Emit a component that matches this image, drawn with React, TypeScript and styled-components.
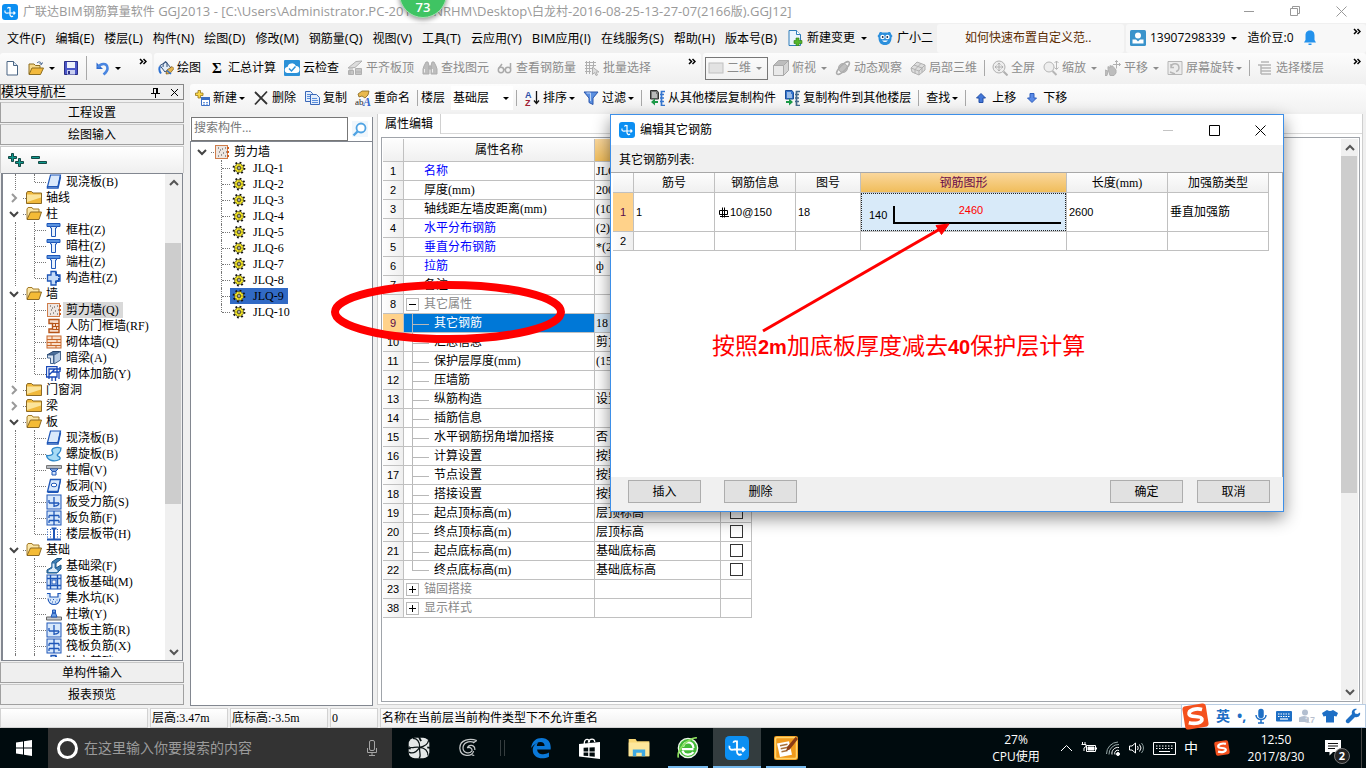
import React from 'react';
import styled, { createGlobalStyle, css } from 'styled-components';

const UI = '"Open Sans", "Noto Sans CJK SC", sans-serif';
const SONG = '"Liberation Serif", "Noto Sans CJK SC", serif';
const NUM = '"Liberation Sans", "Noto Sans CJK SC", sans-serif';

const Global = createGlobalStyle`
  * { box-sizing: border-box; }
  body { margin: 0; background: #f0f0f0; overflow: hidden; }
  button, input { font: inherit; color: inherit; }
`;

/* ---------- icons ---------- */

const blue = '#1f57b8';
const pale = '#d8e8fb';

const icons: Record<string, React.ReactNode> = {
  doc: <><path d="M3 1.5h6.500l4 4v9.500H3z" fill="#fff" stroke="#4a6583" /><path d="M9.500 1.500v4h4" fill="#dbe7f5" stroke="#4a6583" /></>,
  open: <><path d="M1 14V4h5l1.500 1.500H12V8" fill="#f6d98a" stroke="#8d6d1f" /><path d="M1 14.500 4 8h11.500l-3 6.500z" fill="#f2b93c" stroke="#8d6d1f" /><path d="M9 3c2-2 4-1 4.500 1M14.500 2.500l-1 2-2-1" fill="none" stroke="#3d5d8a" /></>,
  save: <><path d="M1.500 1.500h13v13h-13z" fill="#4b57c8" stroke="#2b2f86" /><rect x="4" y="2" width="8" height="6" fill="#eef2fb" /><rect x="4" y="10" width="8" height="4.500" fill="#c9cff0" /><rect x="5" y="11" width="2" height="3" fill="#2b2f86" /></>,
  undo: <><path d="M2.500 2.500v6.500h6.500z" fill="#2e6bd0" /><path d="M4 7.500C6.500 3 13 2.500 13.500 8c.2 3-1.500 4.500-4 6.500" fill="none" stroke="#4a86e0" strokeWidth="2.600" /></>,
  paint: <><path d="M2 5.500 8 2l5 6-6 4z" fill="#e3ecf6" stroke="#314e78" /><path d="M5 7c0-5 3-7 4-4v4" stroke="#314e78" fill="none" /><path d="m8 14 1-4 5-3.500 2 2-4 5z" fill="#e6b54e" stroke="#7a5212" strokeWidth=".7" /><path d="M9 10.500 13 14" stroke="#2d71d2" strokeWidth="1.500" /><path d="M2 6.500c-1.500 3-.5 5 1 7" stroke="#2d71d2" strokeWidth="2" fill="none" /></>,
  cloud: <><rect width="16" height="16" rx="1" fill="#2b91d8" /><path d="M4 13a3 3 0 0 1-.5-6 4.500 4.500 0 0 1 8.500-1 3.500 3.500 0 0 1 0 7z" fill="#fff" /><path d="m5 8.500 2.500 2.500 4-4.500" stroke="#2b91d8" fill="none" strokeWidth="1.500" /></>,
  flat: <g fill="#ddd" stroke="#b0b0b0"><path d="M1 8 9 1.500l6-.5-7 6.500z" /><path d="M1.500 10.500h5v4h-5zM8.500 8.500h6v6h-6z" fill="#c6c6c6" /><path d="M3 8v6M5 8v2.500M8 12h7" /></g>,
  binoc: <g fill="#bdbdbd" stroke="#adadad"><path d="M2 6 4 2h2l1 4v8H1V9zM14 6l-2-4h-2L9 6v8h6V9z" /><path d="M7 6h2v3H7z" /><path d="M2.500 9v3.500M10.500 9v3.500" stroke="#eee" /></g>,
  glasses: <g fill="none" stroke="#aaa" strokeWidth="1.500"><circle cx="4" cy="10" r="2.700" /><circle cx="11" cy="10" r="2.700" /><path d="M6.500 9.500h2M2 8l3-4M13.500 9V3" /></g>,
  batch: <g fill="none" stroke="#b0b0b0"><path d="M1 2.500h11M1 5.500h11M1 8.500h7M1 11.500h6M2.500 1v13M5.500 1v13M9.500 1v6" /><path d="m8.500 7 6.500 5h-3l1.500 3-1.500.5-1.500-3-2 2z" fill="#ddd" /></g>,
  flatbox: <rect x="1" y="3" width="14" height="10" fill="#e2e2e2" stroke="#c0c0c0" />,
  cube: <g stroke="#aaa" fill="#e9e9e9"><path d="M.5 5.500h10v10H.5z" /><path d="m.5 5.500 5-5h10l-5 5z" fill="#bdbdbd" /><path d="m10.500 5.500 5-5v10l-5 5z" fill="#d4d4d4" /></g>,
  planet: <g fill="#c0c0c0" stroke="#adadad"><circle cx="8" cy="8" r="4.500" /><ellipse cx="8" cy="8" rx="8.500" ry="2.800" transform="rotate(-45 8 8)" fill="none" strokeWidth="1.500" /></g>,
  local3d: <g fill="#ddd" stroke="#b0b0b0"><path d="m1 8 6-6 8 3v5l-6 5-7-3z" /><path d="m1 8 8 3 6-6M9 11v4M4 5l8 3M11 3.500 5 9.500M5 9.500v4M12 8v4.500" fill="none" /></g>,
  full: <g fill="none" stroke="#b0b0b0"><circle cx="7" cy="7" r="6" fill="#eee" /><path d="M7 3v8M3 7h8M5.500 4.500 7 3l1.500 1.500M5.500 9.500 7 11l1.500-1.500M4.500 5.500 3 7l1.500 1.500M9.500 5.500 11 7 9.500 8.500" /><path d="m11.500 11.500 4 4" strokeWidth="2" /></g>,
  zoom: <g fill="none" stroke="#b6b6b6"><circle cx="6" cy="7" r="5" fill="#eee" /><path d="m9.500 11 4 4" strokeWidth="2" /><path d="M13.500 1v8M11.500 3l2-2 2 2M11.500 7.500l2 2 2-2" /></g>,
  pan: <g fill="#bdbdbd" stroke="#b0b0b0"><path d="M3 9V6.500L5 8V5.500L7 7V5.500l2 2 2 2.500v3l-2 2.500H5z" /><path d="M11.500.5v8M8 4.500h7.500M10 2 11.500.5 13 2M14 3l1.500 1.500L14 6" fill="none" /><path d="m0 10 3 1-1 4.500H0z" /></g>,
  rotate: <g fill="none" stroke="#b6b6b6"><path d="M1 1.500h14v13H1z" fill="#ececec" /><path d="M4 7a4 4 0 1 1 5 4.500M4 4v3.500h3M3 12l5 2" strokeWidth="1.500" /></g>,
  floors: <g fill="none" stroke="#b6b6b6" strokeWidth="1.500"><path d="M1 5h13M4 2h8M4 8h10M4 11h10M4 14h10M4 5v9" /></g>,
  add: <><path d="M4 .5h2.500V3H9v2.500H6.500V8H4V5.500H1.500V3H4z" fill="#fbd849" stroke="#94731a" strokeWidth=".8" /><path d="M7.500 7.500h8v8h-8z" fill="#fff" stroke="#3c6fc4" /><path d="M7 7h9v3H7z" fill="#3c6fc4" /><path d="M9 12.500h2M12 12.500h2M9 14.200h2M12 14.200h2" stroke="#6b97dc" /></>,
  cross: <path d="m2 2 12 12M14 1.500 2 14.500" stroke="#333" strokeWidth="1.800" />,
  copy: <g stroke="#3a68b8" fill="#e4eefc"><path d="M1.500 1.500h5l2 2v8h-7z" /><path d="M6.500 4.500h6l3 3v7h-9z" /><path d="M8 8.500h5M8 10.500h6M8 12.500h6M3 4.500h3M3 6.500h3M3 8.500h3" stroke="#5c8fdc" /></g>,
  rename: <><path d="M3 4 7 1h7l-1 4-3 3-3-2-3 1z" fill="#e9b94f" stroke="#84641e" strokeWidth=".8" /><text x="0" y="15" fontSize="9" fontFamily="Liberation Serif" fill="#222">ab</text><text x="8" y="15.500" fontSize="12" fontWeight="700" fontStyle="italic" fontFamily="Liberation Serif" fill="#3264cc">A</text></>,
  az: <><text x="1" y="7.500" fontSize="9" fontWeight="700" fontFamily="Liberation Sans" fill="#2d4fa8">A</text><text x="1" y="15.500" fontSize="9" fontWeight="700" fontFamily="Liberation Sans" fill="#a02034">Z</text><path d="M12.500 1v12M10 10.500l2.500 3 2.500-3" fill="none" stroke="#111" strokeWidth="1.300" /></>,
  funnel: <><path d="M1 2h14l-5 6v6.500l-4-2V8z" fill="#5a8fe0" stroke="#2a56ad" /><path d="M3.500 3h4v8" fill="none" stroke="#bcd4f7" /></>,
  fromfloor: <><path d="M1.500.5H8l1.500 2V9h-8z" fill="#777" stroke="#333" /><path d="M3 3h4M3 5h5M3 7h5" stroke="#fff" /><path d="m6 8.500-4 3.500 4 3.500V13h3v-2H6z" fill="#1d9a48" /><path d="M16 1.500h-3.500v14H16M11 4.500h4M11 8h4M11 11.500h4" fill="none" stroke="#3576cf" strokeWidth="1.700" /></>,
  tofloor: <><path d="M1.500.5H8l1.500 2V9h-8z" fill="#3576cf" stroke="#1c4d96" /><path d="M3 3h4M3 5h5M3 7h5" stroke="#fff" /><path d="m5 8.500 4 3.500-4 3.500V13H2v-2h3z" fill="#1d9a48" /><path d="M16 1.500h-3.500v14H16M11 4.500h4M11 8h4M11 11.500h4" fill="none" stroke="#456a8c" strokeWidth="1.700" /></>,
  up: <path d="M8 3.500 12.500 8H10v4.500H6V8H3.500z" fill="#4377d8" stroke="#2450a8" />,
  down: <path d="M8 12.500 3.500 8H6V3.500h4V8h2.500z" fill="#5a8ae6" stroke="#2f5fbe" />,
  change: <><path d="M2 .5h7.500l4 4v11H2z" fill="#eaf4fd" stroke="#2f7dba" /><path d="M9.500.5v4h4" fill="#fff" stroke="#2f7dba" /><path d="M9 8h3v2.500h3v3h-3v2.200H9v-2.200H7v-3h2z" fill="#54b52c" stroke="#2c7a12" strokeWidth=".6" /></>,
  owl: <><path d="M2 4c0-2 2-2.500 3-1.500h6C12 1.500 14 2 14 4l1.500 2-1 1.500c0 5-2.500 7.500-6.500 7.500s-6.500-2.500-6.500-7.500L.5 6z" fill="#2c8fdc" /><circle cx="5.500" cy="7" r="2.200" fill="#fff" /><circle cx="10.500" cy="7" r="2.200" fill="#fff" /><circle cx="5.700" cy="7" r=".9" fill="#124" /><circle cx="10.300" cy="7" r=".9" fill="#124" /><path d="M5 10.500q3 3 6 0z" fill="#fff" /></>,
  user: <><rect width="16" height="16" rx="1.500" fill="#3a93cb" /><circle cx="8" cy="5.500" r="3" fill="#fff" /><path d="M2.500 13.500V9.500H6l2 2 2-2h3.500v4z" fill="#fff" /></>,
  bell: <><path d="M8 .5c3.500 0 4.500 2.500 4.500 5v4.500l1.500 2.500H2L3.500 10V5.500c0-2.500 1-5 4.500-5z" fill="#2492ec" /><path d="M6.500 13.500h3V15h-3z" fill="#2492ec" /></>,
  search: <><rect width="16" height="16" fill="#f1f7fc" /><circle cx="9" cy="7" r="4.500" fill="#fff" stroke="#4fa3e3" strokeWidth="1.800" /><path d="m5.500 10.500-4 4" stroke="#4fa3e3" strokeWidth="2.400" /></>,
  expand: <path d="M3.500 1.500h2v3h3v2h-3v3h-2v-3h-3v-2h3zM10.500 6.500h2v3h3v2h-3v3h-2v-3h-3v-2h3z" fill="#0d9a8d" stroke="#093b38" strokeWidth=".9" />,
  collapse: <path d="M.5 4.500h8v2h-8zM7.500 9.500h8v2h-8z" fill="#0d9a8d" stroke="#093b38" strokeWidth=".9" />,
  folder: <><path d="M.5 13.500V3l1-1.500h4L7 3h8.500v10.500z" fill="#f0b83b" stroke="#8c6a25" /><path d="M1 4.500h14v3L1 12z" fill="#fbe49b" /></>,
  folderOpen: <><path d="M1 13V3l1-1.500h4L7 3h6v3" fill="#fbe6a6" stroke="#a37a27" /><path d="M1 13.500 4.500 6h11L13 13.500z" fill="#f4bb36" stroke="#8c6a25" /></>,
  slab: <><path d="M4.500 1h10L12 12.500H1.500z" fill="#dbe9fb" stroke={blue} strokeWidth="1.200" /><path d="M1.500 12.500V14H12l2.500-11.500" fill="none" stroke={blue} strokeWidth="1.500" /></>,
  column: <><path d="M1 1.500h13v3H1z" fill="#5a93e0" stroke={blue} /><path d="M4.500 4.500h6V6H9.500v8.500h-4V6h-1z" fill="#e9f2fd" stroke={blue} /></>,
  gcol: <><path d="M5 1.500h5V5h4v6h-4v4H5v-4H1.500V5H5z" fill="#c5dbf8" stroke={blue} strokeWidth="1.300" /><path d="M10 2v3h3v6h-3v3" fill="none" stroke={blue} strokeWidth="2" strokeDasharray="2 1" /></>,
  wall: <><rect x="1.500" y="1.500" width="12" height="13" fill="#eee6e1" stroke="#cf7d4b" /><path d="M4 4h1M8 5h1M11 4h1M5 8h1M9 9h1M4 12h1M7 11h1M11 12h1M12 8h1M6 6h1" stroke="#444" /><path d="M14 3v2M14 7v2M14 11v2" stroke="#d05c1d" strokeWidth="2" /></>,
  rf: <><path d="M3 1.500h10v13H3v-3.500h3.500v-5.500H3z" fill="#f7ddcb" stroke="#b55318" strokeWidth="1.400" /><path d="M6.500 5.500H13M6.500 8.500H13M6.500 11.500H13M9.500 5.500v3M10.500 8.500v3" stroke="#b55318" /></>,
  brick: <><rect x="1" y="2" width="14" height="12" fill="#f9dfcb" stroke="#c8682c" /><path d="M1 5.500h14M1 8.500h14M1 11.500h14M6 2v3.500M11 5.500v3M5 8.500v3M10 11.500V14" stroke="#c8682c" /></>,
  beam: <><path d="m1 5 6-3.500h8L9 5z" fill="#4a6f9c" stroke="#29476e" /><path d="M1.500 5h6v8.500h-3V8h-3z" fill="#dbe6f2" stroke="#44658e" /><path d="m8 5 6.500-3.500V10L8 14z" fill="#b7cce4" stroke="#44658e" /></>,
  rebar: <g fill="none" stroke="#1848b8" strokeWidth="1.300"><path d="M.5 11V.5H11V11zM3 13V3h12M6 6h7v7M6 15v-4M9.500 15v-4M3 9l6-6M14 1v5" /></g>,
  spiral: <path d="M15 2C10 .5 4 2.500 6.500 6c1.500 2-1.500 4-6 3.500 1 5.500 8.500 6.500 13 4 2.500-3-3.500-3-2-5s3.500-2 3.500-6.500z" fill="#a7dbf5" stroke="#2e86c8" strokeWidth="1.300" />,
  cap: <><path d="M.5 3.500h15v3h-15z" fill="#b5b9bf" stroke="#777" /><path d="M4 7h8l-2 2H6zM6 9.500h4V13H6z" fill="#d3e4fa" stroke={blue} /></>,
  hole: <><path d="M4.500 1.500h10L12 13.500H1.500z" fill={pale} stroke={blue} strokeWidth="1.300" /><ellipse cx="8" cy="7" rx="2.800" ry="1.800" fill="#fff" stroke={blue} /><path d="M1.500 14.500H12l2.500-12" fill="none" stroke={blue} /></>,
  bar1: <><rect x="1" y="1" width="14" height="14" fill={pale} stroke={blue} /><path d="M8 3v10M3 9h10M3 6v3M13 9c0 3-4 3-5 3" stroke={blue} fill="none" strokeWidth="1.300" /></>,
  bar2: <><rect x="1" y="1" width="14" height="14" fill={pale} stroke={blue} /><path d="M3 5.500h10M3 10.500h10M3 5.500V8M13 5.500V8M8 1v14M3 10.500V13M13 10.500V13" stroke={blue} fill="none" strokeWidth="1.300" /></>,
  strip: <><path d="M1.500 3v10M4.500 3v10M11.500 3v10M14.500 3v10" stroke={blue} strokeDasharray="1 1.500" /><path d="M8 2v11M5.500 2.500h5M1 13.500h14" stroke={blue} strokeWidth="2" /></>,
  fbeam: <><path d="m6 4 5-3.500h5L10 5v5l5-3v4l-4 4H1v-3l5-3z" fill="#3f7fb5" stroke="#17507f" /><path d="M2 14.500V12l4-2V5h3v5l3 2v2.500z" fill="#dcebf8" stroke="#2c6da5" /></>,
  raft: <><rect x="1" y="1" width="14" height="14" fill={pale} stroke={blue} /><path d="M4.500 1v14M11.500 1v14M1 4.500h14M1 11.500h14" stroke={blue} strokeWidth="1.400" /><rect x="6" y="6" width="4" height="4" fill="#fff" stroke={blue} /></>,
  pit: <><path d="M.5 3.500H4v3.500h8V3.500h3.500c0 3-.5 4-2 5.500.5 4-3 5.500-5.500 5.500S2 13 2.500 9C1 7.500.5 6.500.5 3.500z" fill={pale} stroke="none" /><path d="M1 3.500h3V7h8V3.500h3M2 8.500c.5 8 11.500 8 12 0" fill="none" stroke={blue} strokeWidth="1.200" /><path d="M4 10h1M7 9.500h1M10.500 10h1M6 12h1M9 12h1" stroke={blue} /></>,
  pier: <><path d="M.5 11h15v3H.5z" fill="#c5c9ce" stroke="#666" /><path d="M5 11 6.500 7h3L11 11zM6.500 4h3v3h-3z" fill="#6fa1e4" stroke={blue} /></>,
  gear: <><circle cx="8" cy="8" r="6" fill="none" stroke="#111" strokeWidth="2.600" strokeDasharray="2 2.700" /><circle cx="8" cy="8" r="5.200" fill="#fff021" stroke="#333" strokeWidth=".7" /><path d="M8 3.500v9M3.500 8h9M5 5l6 6M11 5l-6 6" stroke="#333" strokeWidth=".6" /><circle cx="8" cy="8" r="1.600" fill="#fff" stroke="#111" strokeWidth=".9" /></>,
  logo: <><rect width="16" height="16" rx="3" fill="#0c8ff2" /><path d="M8 3v7.500c0 2 2 2.500 3 1.500M5.500 4.500C6 3 8 3 8 4.500M3 6.500c-.5 2.500 1 3 3 2.500h7M11.500 7.500 13 9l-1.500 1.500" fill="none" stroke="#fff" strokeWidth="1.200" /></>,
  sogou: <g transform="rotate(-9 8 8)"><rect x="1" y="1" width="14" height="14" rx="2" fill="#f4511e" /><path d="M12.500 4.500C9 3 4.500 3.500 4.500 6s7 1.500 7 4-4.500 2.500-8 1" fill="none" stroke="#fff" strokeWidth="2.200" /></g>,
  mic: <g fill="none" stroke="#1e6fc5" strokeWidth="1.500"><rect x="6" y="1.500" width="4" height="8" rx="2" fill="#1e6fc5" /><path d="M3 7c0 6 10 6 10 0M8 12v3M5 15h6" /></g>,
  kbd: <><rect x="0" y="3" width="16" height="10.500" rx="1" fill="#1e6fc5" /><path d="M2 6h12M2 8.500h12" stroke="#fff" strokeWidth="1.200" strokeDasharray="1.500 1" /><path d="M4 11h8" stroke="#fff" strokeWidth="1.200" /></>,
  person: <><circle cx="6" cy="4.500" r="3" fill="#b3bfd0" /><path d="M0 14V9.500q5-3 10 0V14z" fill="#b3bfd0" /><text x="6" y="15" fontSize="9" fontWeight="700" fontFamily="Liberation Sans" fill="#95a3b8" stroke="#fff" strokeWidth=".3">17</text></>,
  shirt: <path d="M5 2q3 2 6 0l5 3-1.500 3.500L12 8v6.500H4V8l-2.500.5L0 5z" fill="#1e6fc5" />,
  wrench: <path d="M15 4.500 12.500 6 10 5.500 9.500 3 12 1C9 0 6 2.500 7 6L1 12c-1 2 1 4 3 3l6-6c3 1 6-1.500 5-4.500z" fill="#1e6fc5" />,
  micLine: <g fill="none" stroke="#a5a5a5" strokeWidth="1"><rect x="5.500" y=".5" width="5" height="10" rx="1.500" /><path d="M3.500 8v4.500h9V8M8 12.500v3M5 15.500h6" /></g>,
  win: <path d="M0 2.500 7 1.500v6H0zM8 1.300 16 0v7.500H8zM0 8.500h7v6L0 13.500zM8 8.500h8V16l-8-1.200z" fill="#fff" />,
  flower: <><rect x=".5" y=".5" width="15" height="15" rx="4.500" fill="#e4e8e8" /><path d="M8.500 7.500C8.500 3 6.500 1 3.500 1M8.500 7.500C12 7 14.500 5 15 2.500M8.500 7.500c4.500.5 6 3 6 6M8.500 7.500C8 12 10 14 8 15.500M8.500 7.500C5 6.500 3 9 .5 7M8.500 7.500c-3 4.500-6 4.500-8 3.500" fill="none" stroke="#0a1416" strokeWidth=".9" /><path d="M8 0q1 2 1.500 3M0 8l2 .5M16 8l-2-.5" stroke="#0a1416" strokeWidth="1.300" /></>,
  swirl: <g fill="none" stroke="#c4c8c9"><path d="M15 2C10 0 1 1 1.500 8.500 2 15 11 15.500 12.500 10.500M13 3.500C8 2 4 4 4 8s5 5 7 2.500c1-2-2-4-3.500-2.500 1-3 6-3 6 1.500" /><path d="m12 4 3-2M13 14l-2-.5" /></g>,
  edge: <path d="M.8 8C1.500 3 4.500.7 8.500.7c5 0 7 3.800 6.500 8.300H5.200c.3 3.800 5 4.500 8.600 2.300v3C9 16.800 2 15.500 2 9.500 2 6.500 4 4.800 6 4c-.8 1-1 1.600-1 2.500h5.600C10.600 2.500 5 2.500.8 8z" fill="#0a78d8" />,
  store: <><path d="M0 4.500 16 3v13L0 14z" fill="#fff" /><path d="M4 4.500C4 0 8 0 8 3.500M7 3.500C8 0 12 0 12 3" fill="none" stroke="#fff" /><path d="M3.500 7.500 7 7.300v2.900H3.500zM8 7.200l4-.2v3.200H8zM3.500 11H7v2.800l-3.500-.3zM8 11h4v3.200l-4-.3z" fill="#000a0c" /></>,
  explorer: <><path d="M.5 1.500h5l1 1.500h9v11H.5z" fill="#f8d775" /><path d="M.5 4h15v10H.5z" fill="#fde79b" /><path d="M3.500 14V9h9v5h-2.500v-2.500h-4V14z" fill="#3fa9e2" /></>,
  green: <><circle cx="8" cy="8" r="7" fill="#43bb38" stroke="#eef8ea" strokeWidth="1" /><path d="M3.500 8.800h8.500M4.500 7c.5-4 7-4.500 7.500 1M12 11c-2 2.500-7 2.500-8-1" fill="none" stroke="#fff" strokeWidth="1.600" /><path d="M1 15C-.5 9 8 1 14.500.5" fill="none" stroke="#8be05e" strokeWidth="1.200" /></>,
  editor: <><rect x="0" y="0" width="16" height="16" rx="1.500" fill="#f09a1c" /><rect x="1" y="1" width="14" height="14" rx="1" fill="none" stroke="#ffd46a" /><path d="m2 5 8-1.500 2 9-8 1.500z" fill="#fff" /><path d="m4 6.500 5-1M4.500 8.500l5-1M5 10.500l4-.8" stroke="#a9713a" /><path d="m8 10 1-3 5.500-6.500L16 2l-5.500 7z" fill="#8b3b14" /></>,
  battery: <g fill="none" stroke="#fff"><path d="M5.500 5.500h9v6h-9zM15.500 7.500v2" /><path d="M7 7h6v3H7z" fill="#fff" /><path d="M1.500 2v3M4 2v3M.5 4.500h4.500v2L3 8v3" /></g>,
  wifi: <g fill="none" stroke="#fff"><path d="M10 14.500a3 3 0 0 1 4-4M7 14.500a6 6 0 0 1 7-7" /><path d="M4 14.500A9.500 9.500 0 0 1 14 4.500M1.500 14A12 12 0 0 1 13 2" stroke="#9aa" /><circle cx="13" cy="14" r="1.500" fill="#fff" /></g>,
  volume: <g fill="none" stroke="#fff"><path d="M.5 6v4H3l3.500 3V3L3 6zM8.500 6q1.500 2 0 4M10.500 4.500q3 3.500 0 7" /><path d="M12.500 3q4 5 0 10" stroke="#899" /></g>,
  notify: <><path d="M0 0h16v12H8l-3.500 3.500V12H0z" fill="#fff" /><path d="M3 3.500h10M3 6h10M3 8.500h7" stroke="#111" /></>,
};

const Svg = styled.svg`
  display: block;
  flex: none;
`;

function Icon({ name, size = 16 }: { name: string; size?: number }) {
  return <Svg width={size} height={size} viewBox="0 0 16 16" aria-hidden="true">{icons[name]}</Svg>;
}

const Chevron = ({ dir, color = '#555' }: { dir: 'up' | 'down' | 'right'; color?: string }) => (
  <Svg width="10" height="10" viewBox="0 0 10 10" fill="none" stroke={color} strokeWidth="2">
    <path d={dir === 'up' ? 'M1 7l4-4 4 4' : dir === 'down' ? 'M1 3l4 4 4-4' : 'M3 1l4 4-4 4'} />
  </Svg>
);

/* Latin runs are set one pixel larger than the Chinese ones around them. */
const Latin = styled.span`
  font-size: 13px;
`;

const Mixed = ({ text }: { text: string }) => (
  <>{text.split(/([\x20-\x7e]+)/).map((part, i) => (i % 2 ? <Latin key={i}>{part}</Latin> : part))}</>
);

/* ---------- frame ---------- */

const App_ = styled.div`
  position: relative;
  display: flex;
  flex-direction: column;
  height: 100vh;
  overflow: hidden;
  background: #f0f0f0;
  font: 12px/16px ${UI};
  color: #000;
`;

const TitleBar = styled.header`
  display: flex;
  align-items: center;
  flex: none;
  height: 23px;
  padding: 0 2px;
  gap: 5px;
  background: #fff;
  color: #999;
  white-space: nowrap;
`;

const WindowTitle = styled.h1`
  flex: 1;
  margin: 0;
  font-size: 12px;
  font-weight: 400;
  line-height: 22px;
  white-space: pre;
`;

const WindowButtons = styled.div`
  display: flex;
  flex: none;
`;

const WindowButton = styled.button`
  display: grid;
  place-items: center;
  width: 46px;
  height: 20px;
  padding: 0;
  border: 0;
  background: none;
`;

const Bubble = styled.div`
  position: absolute;
  z-index: 5;
  top: -30px;
  left: 399px;
  width: 48px;
  height: 48px;
  padding-top: 28px;
  border: 1px solid #a5dfb1;
  border-radius: 50%;
  background: #3fc463;
  box-shadow: 0 2px 5px #0006;
  color: #fff;
  text-align: center;
  font-size: 13px;
  font-weight: 600;
`;

const MenuBar = styled.nav`
  display: flex;
  align-items: center;
  flex: none;
  height: 30px;
  white-space: nowrap;
`;

const MenuList = styled.div`
  display: flex;
  align-items: center;
  flex: 1;
  min-width: 0;
  padding-left: 7px;
  gap: 10px;
`;

const plain = css`
  border: 0;
  padding: 0;
  background: none;
  white-space: nowrap;
`;

const MenuButton = styled.button<{ $gap?: number }>`
  ${plain}
  display: flex;
  align-items: center;
  gap: ${p => p.$gap ?? 4}px;
`;

const MenuText = styled.button`
  ${plain}
`;

const MenuPanel = styled.div<{ $w: number; $end?: boolean }>`
  display: flex;
  align-items: center;
  flex: none;
  width: ${p => p.$w}px;
  height: 29px;
  margin-left: 2px;
  padding: 0 ${p => (p.$end ? 0 : 4)}px 0 4px;
  gap: 10px;
  border-radius: 3px;
  background: #f8f8f8;
`;

const Tip = styled.a`
  margin-left: 24px;
  color: #5c2c00;
  text-decoration: none;
`;

const Toolbars = styled.div`
  display: flex;
  flex: none;
  height: 30px;
  gap: 2px;
`;

const Strip = styled.div<{ $w?: number; $pad?: number }>`
  display: flex;
  align-items: center;
  flex: ${p => (p.$w ? 'none' : '1')};
  width: ${p => (p.$w ? `${p.$w}px` : 'auto')};
  min-width: 0;
  padding-left: ${p => p.$pad ?? 0}px;
  border-radius: 3px;
  background: linear-gradient(#fcfcfc, #f0f0f0);
  overflow: hidden;
`;

const ToolButton = styled.button<{ $off?: boolean }>`
  ${plain}
  display: flex;
  align-items: center;
  flex: none;
  height: 22px;
  padding: 0 4px;
  gap: 3px;
  color: ${p => (p.$off ? '#8c8c8c' : '#000')};
`;

const Caret = styled.i<{ $wide?: boolean }>`
  flex: none;
  width: 5px;
  margin-left: ${p => (p.$wide ? 2 : -1)}px;
  border: solid transparent;
  border-width: 3px 3px 0;
  border-top-color: currentColor;
`;

const Sep = styled.i<{ $tall?: boolean }>`
  flex: none;
  width: 1px;
  height: ${p => (p.$tall ? 24 : 16)}px;
  margin: 0 3px;
  background: #a8a8a8;
`;

const More = styled.button`
  ${plain}
  align-self: flex-start;
  flex: none;
  width: 13px;
  height: 16px;
  margin-left: auto;
`;

const Sigma = styled.b`
  width: 16px;
  font: 700 15px/16px "Liberation Serif", serif;
  text-align: center;
`;

const MoreIcon = () => (
  <Svg width="8" height="7" viewBox="0 0 8 7" fill="none" stroke="#000" strokeWidth="1.500">
    <path d="M1 1l2.500 2.500L1 6M4.500 1 7 3.500 4.500 6" />
  </Svg>
);

const ViewSelect = styled.button`
  ${plain}
  display: flex;
  align-items: center;
  flex: none;
  width: 63px;
  height: 23px;
  margin-right: 1px;
  padding: 0 4px 0 2px;
  gap: 3px;
  border: 1px solid #777;
  color: #8c8c8c;
`;

const Workspace = styled.main`
  display: flex;
  flex: 1;
  min-height: 0;
  gap: 6px;
`;

/* ---------- module navigator ---------- */

const Side = styled.aside`
  display: flex;
  flex-direction: column;
  flex: none;
  width: 184px;
  margin-bottom: 3px;
  gap: 1px;
  font: 12px/16px ${SONG};
`;

const SideHead = styled.div`
  display: flex;
  align-items: center;
  flex: none;
  height: 16px;
  margin: 1px 0;
  padding-right: 4px;
  gap: 10px;
  border: 1px solid #888;
  line-height: 14px;
`;

const SideTitle = styled.h2`
  flex: 1;
  margin: 0;
  font-size: 13px;
  font-weight: 400;
`;

const SideButton = styled.button`
  flex: none;
  height: 21px;
  padding: 0;
  border: 1px solid #a0a0a0;
  border-top-color: #c8c8c8;
  background: #efefef;
  line-height: 18px;
`;

const SideTools = styled.div`
  display: flex;
  align-items: center;
  flex: none;
  height: 27px;
  padding-left: 7px;
  gap: 7px;
  border: 1px solid #ccc;
  border-bottom: 0;
  background: linear-gradient(#fff, #efefef);
`;

const TreeBox = styled.div`
  display: flex;
  flex: 1;
  min-height: 0;
  margin: -1px 1px 0;
  border: 1px solid #828790;
  border-left-width: 2px;
  background: #fff;
`;

const TreeList = styled.ul`
  flex: 1;
  margin: 0 0 3px;
  padding: 0;
  overflow: hidden;
  list-style: none;
  white-space: nowrap;
`;

const TreeRow = styled.li`
  display: flex;
  align-items: center;
  height: 16px;
`;

const Toggle = styled.button`
  ${plain}
  display: flex;
  align-items: center;
  justify-content: space-between;
  width: 23px;
  height: 16px;
  padding-left: 6px;
`;

const Dots = styled.i<{ $w: number }>`
  flex: none;
  width: ${p => p.$w}px;
  border-top: 1px dotted #777;
`;

const Guide = styled.i<{ $w: number; $half?: boolean }>`
  flex: none;
  align-self: flex-start;
  width: ${p => p.$w}px;
  height: ${p => (p.$half ? 8 : 16)}px;
  border-right: 1px dotted #777;
`;

const TreeText = styled.span<{ $on?: boolean }>`
  margin-left: 1px;
  padding: 0 4px 0 3px;
  line-height: 16px;
  background: ${p => (p.$on ? '#d9d9d9' : 'none')};
`;

const Scroll = styled.div`
  display: flex;
  flex-direction: column;
  flex: none;
  width: 17px;
  background: #f0f0f0;
`;

const ScrollButton = styled.button`
  ${plain}
  display: grid;
  place-items: center;
  height: 17px;
`;

const Thumb = styled.i<{ $before: number; $size: number; $after: number }>`
  flex: 1;
  display: flex;
  flex-direction: column;
  &::before { content: ''; flex: ${p => p.$before}; }
  &::after { content: ''; flex: ${p => p.$after}; }
  & > i { flex: ${p => p.$size}; margin-right: 1px; background: #cdcdcd; }
`;

function ScrollBar({ before, size, after }: { before: number; size: number; after: number }) {
  return (
    <Scroll>
      <ScrollButton aria-label="向上"><Chevron dir="up" /></ScrollButton>
      <Thumb $before={before} $size={size} $after={after}><i /></Thumb>
      <ScrollButton aria-label="向下"><Chevron dir="down" /></ScrollButton>
    </Scroll>
  );
}

type Node = { t: string; icon?: string; open?: boolean; last?: boolean; on?: boolean };
const modules: Node[] = [
  { t: '现浇板(B)', icon: 'slab', last: true },
  { t: '轴线' }, { t: '柱', open: true },
  { t: '框柱(Z)', icon: 'column' }, { t: '暗柱(Z)', icon: 'column' }, { t: '端柱(Z)', icon: 'column' },
  { t: '构造柱(Z)', icon: 'gcol', last: true },
  { t: '墙', open: true },
  { t: '剪力墙(Q)', icon: 'wall', on: true }, { t: '人防门框墙(RF)', icon: 'rf' }, { t: '砌体墙(Q)', icon: 'brick' },
  { t: '暗梁(A)', icon: 'beam' }, { t: '砌体加筋(Y)', icon: 'rebar', last: true },
  { t: '门窗洞' }, { t: '梁' }, { t: '板', open: true },
  { t: '现浇板(B)', icon: 'slab' }, { t: '螺旋板(B)', icon: 'spiral' }, { t: '柱帽(V)', icon: 'cap' },
  { t: '板洞(N)', icon: 'hole' }, { t: '板受力筋(S)', icon: 'bar1' }, { t: '板负筋(F)', icon: 'bar2' },
  { t: '楼层板带(H)', icon: 'strip', last: true },
  { t: '基础', open: true },
  { t: '基础梁(F)', icon: 'fbeam' }, { t: '筏板基础(M)', icon: 'raft' }, { t: '集水坑(K)', icon: 'pit' },
  { t: '柱墩(Y)', icon: 'pier' }, { t: '筏板主筋(R)', icon: 'bar1' }, { t: '筏板负筋(X)', icon: 'bar2' },
  { t: '独立基础(P)', icon: 'gcol' },
];

function ModuleTree() {
  return (
    <TreeList>
      {modules.map((n, i) => n.icon ? (
        <TreeRow key={i}>
          <Guide $w={13} /><Guide $w={19} $half={n.last} /><Dots $w={11} />
          <Icon name={n.icon} /><TreeText $on={n.on}>{n.t}</TreeText>
        </TreeRow>
      ) : (
        <TreeRow key={i}>
          <Toggle aria-label={n.t}><Chevron dir={n.open ? 'down' : 'right'} color={n.open ? '#444' : '#999'} /><Dots $w={3} /></Toggle>
          <Icon name={n.open ? 'folderOpen' : 'folder'} /><TreeText>{n.t}</TreeText>
        </TreeRow>
      ))}
    </TreeList>
  );
}

/* ---------- component list ---------- */

const Content = styled.div`
  display: flex;
  flex-direction: column;
  flex: 1;
  min-width: 0;
`;

const EditTools = styled.div`
  display: flex;
  align-items: center;
  flex: none;
  height: 28px;
  margin: 1px 0 2px;
  border-radius: 3px;
  background: linear-gradient(#fdfdfd, #f2f2f2);
  white-space: nowrap;
`;

const FloorPick = styled.button`
  ${plain}
  display: flex;
  align-items: center;
  justify-content: space-between;
  width: 62px;
  height: 24px;
  margin: 0 0 0 6px;
  padding: 0 4px 0 2px;
  background: #fff;
`;

const Panes = styled.div`
  display: flex;
  flex: 1;
  min-height: 0;
  gap: 4px;
`;

const ListPane = styled.section`
  display: flex;
  flex-direction: column;
  flex: none;
  width: 183px;
  margin-bottom: 2px;
  padding-top: 3px;
  font: 12px/16px ${SONG};
`;

const SearchRow = styled.form`
  display: flex;
  align-items: center;
  height: 24px;
  padding-right: 4px;
  gap: 4px;
  background: #fff;
  border-right: 1px solid #828790;
`;

const SearchInput = styled.input`
  flex: 1;
  min-width: 0;
  height: 24px;
  margin-left: 1px;
  padding: 0 2px 3px;
  border: 1px solid #777;
  outline: 0;
  background: #fff;
  font: 12px/16px ${UI};
  &::placeholder { color: #777; opacity: 1; }
`;

const ListBox = styled.div`
  display: flex;
  flex: 1;
  padding-top: 2px;
  border: 1px solid #828790;
  background: #fff;
`;

const ItemLabel = styled.span<{ $on?: boolean }>`
  display: flex;
  align-items: center;
  height: 16px;
  padding: 0 4px 0 2px;
  gap: 7px;
  background: ${p => (p.$on ? '#316ac5' : 'none')};
`;

/* ---------- property grid ---------- */

const EditPane = styled.section`
  display: flex;
  flex-direction: column;
  flex: 1;
  min-width: 0;
  margin: 0 3px 3px 0;
  border: solid #cfcfcf;
  border-width: 0 1px 1px;
  background: #fff;
  font: 12px/16px ${SONG};
`;

const Tabs = styled.div`
  display: flex;
  flex: none;
  height: 20px;
  border-bottom: 1px solid #d9d9d9;
`;

const Tab = styled.button`
  ${plain}
  height: 20px;
  padding: 0 7px;
  border-right: 1px solid #d0d0d0;
  background: #fff;
  line-height: 16px;
`;

const GridFrame = styled.div`
  display: flex;
  justify-content: space-between;
  flex: 1;
  min-height: 0;
  margin: 3px 2px 2px 3px;
  padding: 1px;
  border: 1px solid #a0a4aa;
`;

const Table = styled.table`
  flex: none;
  align-self: flex-start;
  table-layout: fixed;
  border-spacing: 0;
  white-space: nowrap;
  td, th {
    height: 19px;
    padding: 0;
    border: solid #c0c0c0;
    border-width: 0 1px 1px 0;
    font-weight: 400;
    line-height: 16px;
    overflow: hidden;
  }
`;

const HeadCell = styled.th<{ $hot?: boolean; $w: number }>`
  width: ${p => p.$w}px;
  background: ${p => (p.$hot ? 'linear-gradient(#fad79c, #f0bd5b)' : 'linear-gradient(#fdfdfd, #f0f0f0)')};
  color: ${p => (p.$hot ? '#6b0a4a' : '#000')};
`;

const GridHead = styled(HeadCell)`
  && { height: 23px; }
`;

const NumCell = styled.th<{ $on?: boolean }>`
  background: ${p => (p.$on ? '#ffd28a' : 'linear-gradient(90deg, #fdfdfd, #efefef)')};
  color: ${p => (p.$on ? '#5a0a4a' : '#000')};
  font: 11px/16px ${NUM};
`;

const NameCell = styled.td<{ $c: string; $on?: boolean }>`
  color: ${p => p.$c};
  background: ${p => (p.$on ? '#0078d7' : 'none')};
`;

const NameBox = styled.div<{ $pad: number }>`
  display: flex;
  align-items: center;
  height: 18px;
  padding-left: ${p => p.$pad}px;
`;

const Elbow = styled.i<{ $last?: boolean }>`
  align-self: flex-start;
  display: flex;
  width: 17px;
  height: ${p => (p.$last ? 10 : 18)}px;
  margin-right: 5px;
  border-left: 1px solid #b8b8b8;
  ${p => p.$last && 'border-bottom: 1px solid #b8b8b8;'}
  &::before {
    content: '';
    flex: 1;
    height: 10px;
    border-bottom: ${p => (p.$last ? 0 : 1)}px solid #b8b8b8;
  }
`;

const Fold = styled.button`
  display: grid;
  place-items: center;
  width: 13px;
  height: 13px;
  margin-right: 5px;
  padding: 0;
  border: 1px solid #b8b8b8;
  background: #fff;
`;

const ValueCell = styled.td<{ $on?: boolean }>`
  background: ${p => (p.$on ? '#d8eaf9' : 'none')};
  & > span { padding-left: 1px; }
`;

const Check = styled.input`
  appearance: none;
  display: block;
  width: 13px;
  height: 13px;
  margin: 0 0 2px 9px;
  border: 1px solid #333;
  background: #fff;
`;

type Prop = { n: number; t: string; v?: string; k?: 'link' | 'open' | 'shut' | 'child' | 'last'; on?: boolean; check?: boolean };
const props: Prop[] = [
  { n: 1, t: '名称', v: 'JLQ-9', k: 'link' },
  { n: 2, t: '厚度(mm)', v: '200' },
  { n: 3, t: '轴线距左墙皮距离(mm)', v: '(100)' },
  { n: 4, t: '水平分布钢筋', v: '(2)', k: 'link' },
  { n: 5, t: '垂直分布钢筋', v: '*(2)', k: 'link' },
  { n: 6, t: '拉筋', v: 'ф', k: 'link' },
  { n: 7, t: '备注' },
  { n: 8, t: '其它属性', k: 'open' },
  { n: 9, t: '其它钢筋', v: '18', k: 'child', on: true },
  { n: 10, t: '汇总信息', v: '剪力墙', k: 'child' },
  { n: 11, t: '保护层厚度(mm)', v: '(15)', k: 'child' },
  { n: 12, t: '压墙筋', k: 'child' },
  { n: 13, t: '纵筋构造', v: '设置插筋', k: 'child' },
  { n: 14, t: '插筋信息', k: 'child' },
  { n: 15, t: '水平钢筋拐角增加搭接', v: '否', k: 'child' },
  { n: 16, t: '计算设置', v: '按默认', k: 'child' },
  { n: 17, t: '节点设置', v: '按默认', k: 'child' },
  { n: 18, t: '搭接设置', v: '按默认', k: 'child' },
  { n: 19, t: '起点顶标高(m)', v: '层顶标高', k: 'child', check: true },
  { n: 20, t: '终点顶标高(m)', v: '层顶标高', k: 'child', check: true },
  { n: 21, t: '起点底标高(m)', v: '基础底标高', k: 'child', check: true },
  { n: 22, t: '终点底标高(m)', v: '基础底标高', k: 'last', check: true },
  { n: 23, t: '锚固搭接', k: 'shut' },
  { n: 38, t: '显示样式', k: 'shut' },
];

function PropName({ p }: { p: Prop }) {
  if (p.k === 'open' || p.k === 'shut') {
    return (
      <NameBox $pad={2}>
        <Fold aria-label={p.t}>
          <Svg width="9" height="9" viewBox="0 0 9 9" stroke="#000"><path d={p.k === 'open' ? 'M1 4.500h7' : 'M1 4.500h7M4.500 1v7'} /></Svg>
        </Fold>
        {p.t}
      </NameBox>
    );
  }
  if (p.k === 'child' || p.k === 'last') {
    return <NameBox $pad={8}><Elbow $last={p.k === 'last'} />{p.t}</NameBox>;
  }
  return <NameBox $pad={20}>{p.t}</NameBox>;
}

function PropertyGrid() {
  return (
    <Table>
      <thead>
        <tr>
          <GridHead $w={21} /><GridHead $w={191}>属性名称</GridHead>
          <GridHead $w={126} $hot>属性值</GridHead><GridHead $w={31} />
        </tr>
      </thead>
      <tbody>
        {props.map(p => (
          <tr key={p.n}>
            <NumCell $on={p.on}>{p.n}</NumCell>
            <NameCell $on={p.on} $c={p.on ? '#fff' : p.k === 'link' ? '#0000ff' : p.k === 'open' || p.k === 'shut' ? '#888' : '#000'}>
              <PropName p={p} />
            </NameCell>
            <ValueCell $on={p.on}><span>{p.v}</span></ValueCell>
            <td>{p.check && <Check type="checkbox" aria-label={p.t} />}</td>
          </tr>
        ))}
      </tbody>
    </Table>
  );
}

/* ---------- dialog ---------- */

const Dialog = styled.div`
  position: absolute;
  z-index: 3;
  top: 114px;
  left: 610px;
  display: flex;
  flex-direction: column;
  width: 674px;
  height: 398px;
  border: 1px solid #3d8fe8;
  background: #f0f0f0;
  box-shadow: 0 6px 16px #0007;
  font: 12px/16px ${SONG};
`;

const DialogTitle = styled.div`
  display: flex;
  align-items: center;
  flex: none;
  height: 30px;
  padding-left: 8px;
  background: #fff;
  font-family: ${UI};
  & > span { flex: 1; margin-left: 5px; }
`;

const DialogLabel = styled.div`
  flex: none;
  height: 27px;
  padding: 7px 8px 0;
`;

const DialogBody = styled.div`
  flex: 1;
  padding-left: 2px;
  border-top: 1px solid #a8a8a8;
  border-right: 1px solid #a8a8a8;
  background: #fff;
`;

const DialogHead = styled(HeadCell)`
  && { height: 20px; }
`;

const DialogCell = styled.td<{ $tall?: boolean }>`
  && { height: ${p => (p.$tall ? 39 : 19)}px; padding-left: 2px; }
`;

const Num = styled.span`
  font: 11px/16px ${NUM};
`;

const ShapeCell = styled.td`
  && { padding: 0; }
  background: #d8eaf9;
`;

const Shape = styled.div`
  display: flex;
  height: 38px;
  padding: 12px 4px 0 7px;
  border: 1px dotted #222;
  font: 11px/16px ${NUM};
`;

const ShapeSide = styled.span`
  width: 24px;
  padding-top: 1px;
`;

const ShapeBar = styled.span`
  flex: 1;
  height: 18px;
  border: solid #000;
  border-width: 0 0 2px 2px;
  color: #f00;
  line-height: 8px;
  text-align: center;
  padding-right: 14px;
`;

const DialogFoot = styled.div`
  display: flex;
  align-items: flex-start;
  flex: none;
  height: 34px;
  padding: 3px 13px 0 17px;
  gap: 23px;
`;

const PushButton = styled.button`
  width: 73px;
  height: 23px;
  padding: 0;
  border: 1px solid #adadad;
  background: #e1e1e1;
`;

const RightPair = styled.div`
  display: flex;
  margin-left: auto;
  gap: 14px;
`;

const RebarMark = () => (
  <Svg width="12" height="11" viewBox="0 0 12 11" fill="none" stroke="#000"><path d="M1.500 3.500h8v4h-8zM4.500.5v10M6.500.5v10M2 9.500h9" /></Svg>
);

const RebarText = styled.span`
  display: flex;
  align-items: center;
  font: 11px/16px ${NUM};
  padding-left: 1px;
`;

/* ---------- annotations over the screen ---------- */

const Marks = styled.svg`
  position: absolute;
  z-index: 4;
  top: 0;
  left: 0;
  pointer-events: none;
`;

const Note = styled.p`
  position: absolute;
  z-index: 4;
  top: 329px;
  left: 712px;
  margin: 0;
  color: #f00;
  font: 400 23px/30px "Noto Sans CJK SC", sans-serif;
  white-space: nowrap;
  b { font: 700 20px/30px "Liberation Sans", sans-serif; }
`;

/* ---------- bottom bars ---------- */

const StatusBar = styled.footer`
  display: flex;
  flex: none;
  height: 20px;
  gap: 2px;
  font: 12px/18px ${SONG};
  white-space: nowrap;
`;

const StatusCell = styled.div<{ $w?: number }>`
  flex: ${p => (p.$w ? 'none' : '1')};
  width: ${p => (p.$w ? `${p.$w}px` : 'auto')};
  padding-left: 1px;
  border: 1px solid #d2d2d2;
  background: linear-gradient(#fff, #f0f0f0);
`;

const ImeBar = styled.div`
  position: absolute;
  z-index: 4;
  right: 0;
  bottom: 40px;
  display: flex;
  align-items: center;
  width: 185px;
  height: 24px;
  padding-right: 4px;
  gap: 7px;
  border: 1px solid #b9cde3;
  background: #fff;
  color: #1e6fc5;
  font-size: 14px;
  font-weight: 700;
`;

const Taskbar = styled.footer`
  display: flex;
  flex: none;
  height: 40px;
  background: #000b0e;
  color: #fff;
`;

const TaskButton = styled.button<{ $w?: number; $on?: boolean; $line?: boolean }>`
  display: grid;
  place-items: center;
  flex: none;
  width: ${p => p.$w ?? 49}px;
  padding: 0;
  border: 0;
  background: ${p => (p.$on ? '#333c3e' : 'none')};
  box-shadow: ${p => (p.$line ? 'inset 0 -2px #76b9ed' : 'none')};
`;

const TaskSearch = styled.label`
  display: flex;
  align-items: center;
  flex: none;
  width: 344px;
  padding: 0 12px 0 9px;
  gap: 6px;
  background: #333;
`;

const Ring = styled.i`
  flex: none;
  width: 21px;
  height: 21px;
  border: 3px solid #fff;
  border-radius: 50%;
`;

const TaskInput = styled.input`
  flex: 1;
  min-width: 0;
  padding: 0;
  border: 0;
  outline: 0;
  background: none;
  font-size: 14px;
  &::placeholder { color: #9b9b9b; opacity: 1; }
`;

const TaskSep = styled.i`
  align-self: center;
  width: 5px;
  height: 16px;
  margin: 0 11px 0 8px;
  border: solid #353d3f;
  border-width: 0 1px;
`;

const TaskGap = styled.i<{ $w: number }>`
  flex: none;
  width: ${p => p.$w}px;
`;

const Tray = styled.div`
  display: flex;
  align-items: center;
  margin-left: auto;
`;

const TrayText = styled.div<{ $w: number }>`
  width: ${p => p.$w}px;
  text-align: center;
  font-size: 12px;
  line-height: 17px;
`;

const TrayIcons = styled.div`
  display: flex;
  align-items: center;
  gap: 8px;
  margin: 0 8px 0 14px;
  font-size: 14px;
`;

const Badge = styled.span`
  position: absolute;
  right: -9px;
  bottom: -8px;
  width: 16px;
  height: 16px;
  border: 1px solid #777;
  border-radius: 50%;
  background: #222;
  font: 700 11px/14px ${UI};
  text-align: center;
`;

const Bell = styled.button`
  ${plain}
  position: relative;
  width: 16px;
  height: 16px;
  margin: 0 20px 0 11px;
  color: #fff;
`;

const EndLine = styled.i`
  align-self: stretch;
  width: 5px;
  border-left: 1px solid #444;
`;

/* ---------- toolbar data ---------- */

const menus = ['文件(F)', '编辑(E)', '楼层(L)', '构件(N)', '绘图(D)', '修改(M)', '钢筋量(Q)', '视图(V)', '工具(T)', '云应用(Y)', 'BIM应用(I)', '在线服务(S)', '帮助(H)', '版本号(B)'];

function Tool({ icon, text, caret, off }: { icon?: string; text?: string; caret?: 'tight' | 'wide'; off?: boolean }) {
  return (
    <ToolButton $off={off} aria-label={text ? undefined : icon}>
      {icon === 'sigma' ? <Sigma>Σ</Sigma> : icon && <Icon name={icon} />}
      {text}
      {caret && <Caret $wide={caret === 'wide'} />}
    </ToolButton>
  );
}

export default function App() {
  return (
    <App_>
      <Global />
      <TitleBar>
        <Icon name="logo" />
        <WindowTitle><Mixed text={'广联达BIM钢筋算量软件 GGJ2013 - [C:\\Users\\Administrator.PC-201411NRHM\\Desktop\\白龙村-2016-08-25-13-27-07(2166版).GGJ12]'} /></WindowTitle>
        <WindowButtons>
          <WindowButton aria-label="最小化"><Svg width="11" height="11" stroke="#999"><path d="M0 5.500h10" /></Svg></WindowButton>
          <WindowButton aria-label="还原"><Svg width="11" height="11" stroke="#999" fill="none"><path d="M.5 2.500h7v7h-7zM2.500 2V.5h7v7H8" /></Svg></WindowButton>
          <WindowButton aria-label="关闭"><Svg width="11" height="11" stroke="#999"><path d="m.5.5 10 10M10.500.5l-10 10" /></Svg></WindowButton>
        </WindowButtons>
      </TitleBar>
      <Bubble>73</Bubble>

      <MenuBar>
        <MenuList>
          {menus.map(m => <MenuText key={m}><Mixed text={m} /></MenuText>)}
          <MenuButton><Icon name="change" />新建变更<Caret $wide /></MenuButton>
          <MenuButton><Icon name="owl" />广小二</MenuButton>
        </MenuList>
        <MenuPanel $w={187}><Tip href="#tip">如何快速布置自定义范..</Tip></MenuPanel>
        <MenuPanel $w={240} $end>
          <MenuButton><Icon name="user" />13907298339<Caret $wide /></MenuButton>
          <MenuButton $gap={8}>造价豆:0<Icon name="bell" /></MenuButton>
          <More aria-label="更多"><MoreIcon /></More>
        </MenuPanel>
      </MenuBar>

      <Toolbars>
        <Strip $w={152}>
          <Tool icon="doc" /><Tool icon="open" caret="wide" /><Tool icon="save" /><Sep $tall /><Tool icon="undo" caret="wide" />
          <More aria-label="更多"><MoreIcon /></More>
        </Strip>
        <Strip $w={547}>
          <Tool icon="paint" text="绘图" /><Tool icon="sigma" text="汇总计算" /><Tool icon="cloud" text="云检查" />
          <Tool off icon="flat" text="平齐板顶" /><Tool off icon="binoc" text="查找图元" />
          <Tool off icon="glasses" text="查看钢筋量" /><Tool off icon="batch" text="批量选择" />
          <More aria-label="更多"><MoreIcon /></More>
        </Strip>
        <Strip $pad={2}>
          <ViewSelect><Icon name="flatbox" />二维<Caret $wide /></ViewSelect>
          <Tool off icon="cube" text="俯视" caret="wide" /><Tool off icon="planet" text="动态观察" /><Tool off icon="local3d" text="局部三维" />
          <Sep />
          <Tool off icon="full" text="全屏" /><Tool off icon="zoom" text="缩放" caret="wide" /><Tool off icon="pan" text="平移" caret="wide" />
          <Tool off icon="rotate" text="屏幕旋转" caret="tight" />
          <Sep />
          <Tool off icon="floors" text="选择楼层" />
          <More aria-label="更多"><MoreIcon /></More>
        </Strip>
      </Toolbars>

      <Workspace>
        <Side>
          <SideHead>
            <SideTitle>模块导航栏</SideTitle>
            <Svg width="9" height="11" viewBox="0 0 9 11" fill="none" stroke="#000"><path d="M2.500 1v5.500M2 1.500h5M0 6.500h9M4.500 7v4" /><path d="M6 1v5.500" strokeWidth="2" /></Svg>
            <Svg width="9" height="9" viewBox="0 0 9 9" stroke="#000"><path d="m1 1 7 7M8 1 1 8" /></Svg>
          </SideHead>
          <SideButton>工程设置</SideButton>
          <SideButton>绘图输入</SideButton>
          <SideTools><Icon name="expand" /><Icon name="collapse" /></SideTools>
          <TreeBox><ModuleTree /><ScrollBar before={52} size={260} after={138} /></TreeBox>
          <SideButton>单构件输入</SideButton>
          <SideButton>报表预览</SideButton>
        </Side>

        <Content>
          <EditTools>
            <Tool icon="add" text="新建" caret="tight" /><Tool icon="cross" text="删除" /><Tool icon="copy" text="复制" /><Tool icon="rename" text="重命名" />
            <Sep />楼层<FloorPick>基础层<Caret /></FloorPick><Sep />
            <Tool icon="az" text="排序" caret="tight" /><Tool icon="funnel" text="过滤" caret="tight" />
            <Sep />
            <Tool icon="fromfloor" text="从其他楼层复制构件" /><Tool icon="tofloor" text="复制构件到其他楼层" />
            <Sep />
            <Tool text="查找" caret="tight" />
            <Sep />
            <Tool icon="up" text="上移" /><Tool icon="down" text="下移" />
          </EditTools>
          <Panes>
            <ListPane>
              <SearchRow>
                <SearchInput placeholder="搜索构件..." aria-label="搜索构件" />
                <Icon name="search" />
              </SearchRow>
              <ListBox>
                <TreeList>
                  <TreeRow><Toggle aria-label="剪力墙"><Chevron dir="down" color="#444" /><Dots $w={3} /></Toggle><Icon name="wall" /><TreeText>剪力墙</TreeText></TreeRow>
                  {Array.from({ length: 10 }, (_, i) => (
                    <TreeRow key={i}>
                      <Guide $w={31} $half={i === 9} /><Dots $w={8} />
                      <ItemLabel $on={i === 8}><Icon name="gear" size={14} />JLQ-{i + 1}</ItemLabel>
                    </TreeRow>
                  ))}
                </TreeList>
              </ListBox>
            </ListPane>
            <EditPane>
              <Tabs><Tab>属性编辑</Tab></Tabs>
              <GridFrame><PropertyGrid /><ScrollBar before={0} size={338} after={190} /></GridFrame>
            </EditPane>
          </Panes>
        </Content>
      </Workspace>

      <StatusBar>
        <StatusCell $w={148} /><StatusCell $w={78}>层高:3.47m</StatusCell><StatusCell $w={98}>底标高:-3.5m</StatusCell>
        <StatusCell $w={48}>0</StatusCell><StatusCell>名称在当前层当前构件类型下不允许重名</StatusCell>
      </StatusBar>

      <Taskbar>
        <TaskButton $w={48} aria-label="开始"><Icon name="win" /></TaskButton>
        <TaskSearch><Ring /><TaskInput placeholder="在这里输入你要搜索的内容" aria-label="搜索" /><Icon name="micLine" /></TaskSearch>
        <TaskGap $w={2} />
        <TaskButton aria-label="应用"><Icon name="flower" size={22} /></TaskButton>
        <TaskButton aria-label="应用"><Icon name="swirl" size={20} /></TaskButton>
        <TaskSep />
        <TaskButton aria-label="Edge"><Icon name="edge" size={22} /></TaskButton>
        <TaskButton aria-label="商店"><Icon name="store" size={21} /></TaskButton>
        <TaskButton aria-label="文件"><Icon name="explorer" size={22} /></TaskButton>
        <TaskGap $w={5} />
        <TaskButton $w={40} $line aria-label="浏览器"><Icon name="green" size={22} /></TaskButton>
        <TaskGap $w={5} />
        <TaskButton $w={48} $on $line aria-label="GGJ"><Icon name="logo" size={24} /></TaskButton>
        <TaskGap $w={5} />
        <TaskButton $w={40} $line aria-label="编辑"><Icon name="editor" size={24} /></TaskButton>
        <Tray>
          <TrayText $w={60}>27%<br />CPU使用</TrayText>
          <TrayIcons>
            <Svg width="13" height="8" fill="none" stroke="#fff"><path d="m1 7 5.500-5.500L12 7" /></Svg>
            <Icon name="battery" /><Icon name="wifi" /><Icon name="volume" />
            <Svg width="23" height="13" fill="none" stroke="#fff"><path d="M.5.5h22v12H.5z" /><path d="M3 4h17M3 6.500h17" strokeDasharray="1.500 1.500" /><path d="M6 9.500h11" /></Svg>
            中<TaskGap $w={0} /><Icon name="sogou" />
          </TrayIcons>
          <TrayText $w={76}>12:50<br />2017/8/30</TrayText>
          <Bell aria-label="通知"><Icon name="notify" /><Badge>2</Badge></Bell>
          <EndLine />
        </Tray>
      </Taskbar>

      <Dialog role="dialog" aria-label="编辑其它钢筋">
        <DialogTitle>
          <Icon name="logo" /><span>编辑其它钢筋</span>
          <WindowButton aria-label="最小化"><Svg width="11" height="11" stroke="#c4c4c4"><path d="M0 5.500h10" /></Svg></WindowButton>
          <WindowButton aria-label="最大化"><Svg width="11" height="11" stroke="#000" fill="none"><path d="M.5.500h10v10H.5z" /></Svg></WindowButton>
          <WindowButton aria-label="关闭"><Svg width="11" height="11" stroke="#000"><path d="m.5.5 10 10M10.500.5l-10 10" /></Svg></WindowButton>
        </DialogTitle>
        <DialogLabel>其它钢筋列表:</DialogLabel>
        <DialogBody>
          <Table>
            <thead>
              <tr>
                <DialogHead $w={21} /><DialogHead $w={81}>筋号</DialogHead><DialogHead $w={81}>钢筋信息</DialogHead>
                <DialogHead $w={65}>图号</DialogHead><DialogHead $w={206} $hot>钢筋图形</DialogHead>
                <DialogHead $w={101}>长度(mm)</DialogHead><DialogHead $w={101}>加强筋类型</DialogHead>
              </tr>
            </thead>
            <tbody>
              <tr>
                <NumCell $on>1</NumCell>
                <DialogCell $tall><Num>1</Num></DialogCell>
                <DialogCell $tall><RebarText><RebarMark />10@150</RebarText></DialogCell>
                <DialogCell $tall><Num>18</Num></DialogCell>
                <ShapeCell><Shape><ShapeSide>140</ShapeSide><ShapeBar>2460</ShapeBar></Shape></ShapeCell>
                <DialogCell $tall><Num>2600</Num></DialogCell>
                <DialogCell $tall>垂直加强筋</DialogCell>
              </tr>
              <tr>
                <NumCell>2</NumCell>
                <DialogCell /><DialogCell /><DialogCell /><DialogCell /><DialogCell /><DialogCell />
              </tr>
            </tbody>
          </Table>
        </DialogBody>
        <DialogFoot>
          <PushButton>插入</PushButton><PushButton>删除</PushButton>
          <RightPair><PushButton>确定</PushButton><PushButton>取消</PushButton></RightPair>
        </DialogFoot>
      </Dialog>

      <ImeBar>
        <Icon name="sogou" size={27} />英<span>•,</span><Icon name="mic" /><Icon name="kbd" /><Icon name="person" /><Icon name="shirt" /><Icon name="wrench" />
      </ImeBar>

      <Marks width="1100" height="400" viewBox="0 0 1100 400">
        <ellipse cx="448" cy="312" rx="113" ry="27" fill="none" stroke="#f00" strokeWidth="8" />
        <path d="M763 331 940 229" stroke="#f00" strokeWidth="3" />
        <path d="m949 224-13 1.500 5.500 9z" fill="#f00" stroke="#f00" />
      </Marks>
      <Note>按照<b>2m</b>加底板厚度减去<b>40</b>保护层计算</Note>
    </App_>
  );
}
